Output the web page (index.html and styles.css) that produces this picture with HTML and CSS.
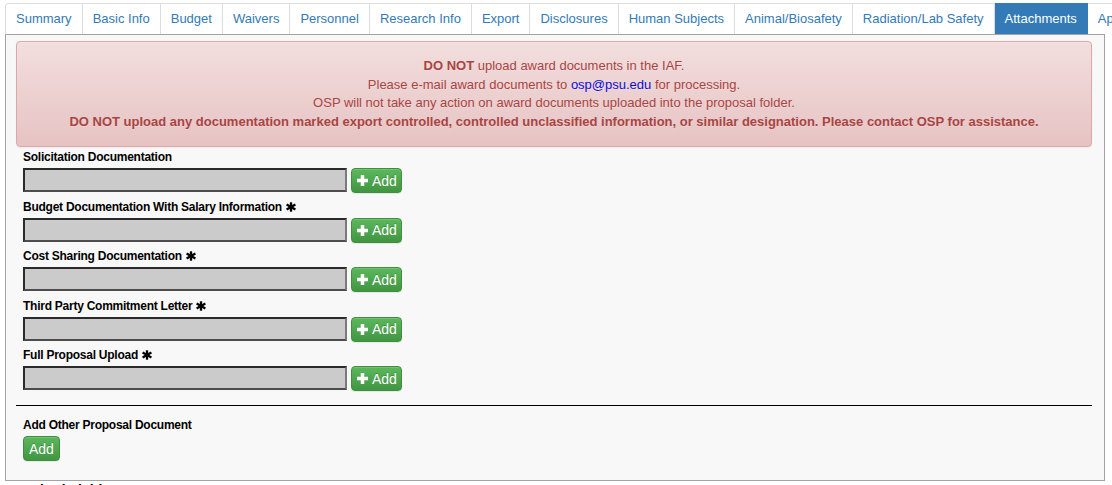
FILE: index.html
```html
<!DOCTYPE html>
<html lang="en">
<head>
<meta charset="utf-8">
<title>Attachments</title>
<link rel="stylesheet" href="styles.css">
</head>
<body>
<div class="page">
  <nav class="tabs">
    <a class="tab first">Summary</a>
    <a class="tab">Basic Info</a>
    <a class="tab">Budget</a>
    <a class="tab">Waivers</a>
    <a class="tab">Personnel</a>
    <a class="tab">Research Info</a>
    <a class="tab">Export</a>
    <a class="tab">Disclosures</a>
    <a class="tab">Human Subjects</a>
    <a class="tab">Animal/Biosafety</a>
    <a class="tab">Radiation/Lab Safety</a>
    <a class="tab active">Attachments</a>
    <a class="tab">Approvals</a>
  </nav>
  <div class="panel">
    <div class="alert">
      <p><strong>DO NOT</strong> upload award documents in the IAF.</p>
      <p>Please e-mail award documents to <a class="mail" href="#">osp@psu.edu</a> for processing.</p>
      <p>OSP will not take any action on award documents uploaded into the proposal folder.</p>
      <p class="strong">DO NOT upload any documentation marked export controlled, controlled unclassified information, or similar designation. Please contact OSP for assistance.</p>
    </div>
    <div class="uploads">
      <div class="field">
        <label class="field-label">Solicitation Documentation</label>
        <div class="field-row">
          <input class="file-box" type="text" readonly>
          <button class="btn" type="button"><svg class="plus" viewBox="0 0 10 10" width="10" height="10"><path d="M3.4 0h3.2v3.4H10v3.2H6.6V10H3.4V6.6H0V3.4h3.4z" fill="#fff"/></svg>Add</button>
        </div>
      </div>
      <div class="field">
        <label class="field-label">Budget Documentation With Salary Information<svg class="req" viewBox="0 0 10 10" width="10" height="10"><g stroke="#000" stroke-width="2.3"><path d="M5 0.3v9.4"/><path d="M0.6 2.5l8.8 5"/><path d="M0.6 7.5l8.8-5"/></g></svg></label>
        <div class="field-row">
          <input class="file-box" type="text" readonly>
          <button class="btn" type="button"><svg class="plus" viewBox="0 0 10 10" width="10" height="10"><path d="M3.4 0h3.2v3.4H10v3.2H6.6V10H3.4V6.6H0V3.4h3.4z" fill="#fff"/></svg>Add</button>
        </div>
      </div>
      <div class="field">
        <label class="field-label">Cost Sharing Documentation<svg class="req" viewBox="0 0 10 10" width="10" height="10"><g stroke="#000" stroke-width="2.3"><path d="M5 0.3v9.4"/><path d="M0.6 2.5l8.8 5"/><path d="M0.6 7.5l8.8-5"/></g></svg></label>
        <div class="field-row">
          <input class="file-box" type="text" readonly>
          <button class="btn" type="button"><svg class="plus" viewBox="0 0 10 10" width="10" height="10"><path d="M3.4 0h3.2v3.4H10v3.2H6.6V10H3.4V6.6H0V3.4h3.4z" fill="#fff"/></svg>Add</button>
        </div>
      </div>
      <div class="field">
        <label class="field-label">Third Party Commitment Letter<svg class="req" viewBox="0 0 10 10" width="10" height="10"><g stroke="#000" stroke-width="2.3"><path d="M5 0.3v9.4"/><path d="M0.6 2.5l8.8 5"/><path d="M0.6 7.5l8.8-5"/></g></svg></label>
        <div class="field-row">
          <input class="file-box" type="text" readonly>
          <button class="btn" type="button"><svg class="plus" viewBox="0 0 10 10" width="10" height="10"><path d="M3.4 0h3.2v3.4H10v3.2H6.6V10H3.4V6.6H0V3.4h3.4z" fill="#fff"/></svg>Add</button>
        </div>
      </div>
      <div class="field">
        <label class="field-label">Full Proposal Upload<svg class="req" viewBox="0 0 10 10" width="10" height="10"><g stroke="#000" stroke-width="2.3"><path d="M5 0.3v9.4"/><path d="M0.6 2.5l8.8 5"/><path d="M0.6 7.5l8.8-5"/></g></svg></label>
        <div class="field-row">
          <input class="file-box" type="text" readonly>
          <button class="btn" type="button"><svg class="plus" viewBox="0 0 10 10" width="10" height="10"><path d="M3.4 0h3.2v3.4H10v3.2H6.6V10H3.4V6.6H0V3.4h3.4z" fill="#fff"/></svg>Add</button>
        </div>
      </div>
    </div>
    <hr class="divider">
    <div class="other">
      <label class="field-label">Add Other Proposal Document</label>
      <button class="btn btn-plain" type="button">Add</button>
    </div>
  </div>
  <div class="required">Required Fields <svg class="req" viewBox="0 0 10 10" width="10" height="10"><g stroke="#000" stroke-width="2.3"><path d="M5 0.3v9.4"/><path d="M0.6 2.5l8.8 5"/><path d="M0.6 7.5l8.8-5"/></g></svg></div>
</div>
</body>
</html>
```

FILE: styles.css
```css
* { box-sizing: border-box; }

html, body {
  margin: 0;
  padding: 0;
  background: #fff;
  overflow: hidden;
}

body {
  font-family: "Liberation Sans", Arial, sans-serif;
  color: #000;
}

.page {
  padding: 3px 0 0 5px;
}

.tabs {
  display: flex;
  flex-wrap: nowrap;
  overflow: hidden;
  white-space: nowrap;
}

.tab {
  flex: none;
  display: block;
  padding: 7px 10px 8px;
  font-size: 13px;
  line-height: 15px;
  color: #337ab7;
  background: #fff;
  border-top: 1px solid #ddd;
  border-right: 1px solid #ddd;
  text-decoration: none;
}

.tab.first {
  border-left: 1px solid #ddd;
  border-top-left-radius: 4px;
}

.tab.active {
  background: #337ab7;
  border-top-color: #337ab7;
  border-right-color: #337ab7;
  color: #fff;
}

.panel {
  width: 1100px;
  border: 1px solid #a3a3a3;
  background: #f8f8f8;
  padding: 6px 12px 19px 10px;
}

.alert {
  margin-bottom: 3px;
  padding: 15px;
  border: 1px solid #dca7a7;
  border-radius: 4px;
  background-image: linear-gradient(to bottom, #f2dede 0, #e7c3c3 100%);
  box-shadow: inset 0 1px 0 rgba(255, 255, 255, .25), 0 1px 2px rgba(0, 0, 0, .05);
  text-shadow: 0 1px 0 rgba(255, 255, 255, .2);
  color: #a94442;
  text-align: center;
  font-size: 13px;
  line-height: 18.57px;
}

.alert p {
  margin: 0;
}

.alert .strong,
.alert strong {
  font-weight: bold;
}

.mail {
  color: #0b0bdc;
  text-decoration: none;
}

.uploads,
.other {
  padding: 0 7px;
}

.field-label {
  display: block;
  font-size: 12px;
  line-height: 14px;
  font-weight: bold;
  letter-spacing: -0.25px;
  margin-bottom: 4px;
  color: #000;
}

.req {
  width: 10px;
  height: 10px;
  margin-left: 4px;
  vertical-align: -1px;
}

.field-row {
  display: flex;
  gap: 4px;
  height: 24px;
  margin-bottom: 7.5px;
}

.file-box {
  width: 324px;
  height: 24px;
  margin: 0;
  padding: 0;
  background: #cbcbcb;
  border: 2px solid;
  border-color: #2a2a2a #7a7a7a #4c4c4c #2a2a2a;
  border-radius: 0;
  outline: none;
}

.btn {
  display: inline-flex;
  align-items: center;
  gap: 4px;
  height: 25px;
  margin: 0;
  padding: 0 4px 0 5px;
  font-family: "Liberation Sans", Arial, sans-serif;
  font-size: 14px;
  line-height: 20px;
  color: #fff;
  border: 1px solid #3e8f3e;
  border-radius: 4px;
  background-image: linear-gradient(to bottom, #5cb85c 0, #419641 100%);
  box-shadow: inset 0 1px 0 rgba(255, 255, 255, .15), 0 1px 1px rgba(0, 0, 0, .075);
  text-shadow: 0 -1px 0 rgba(0, 0, 0, .2);
  cursor: pointer;
}

.btn-plain {
  padding: 0 5px;
}

.plus {
  width: 11px;
  height: 11px;
  flex: none;
}

.divider {
  height: 0;
  margin: 15px 0 12px;
  border: 0;
  border-top: 1px solid #000;
}

.required {
  margin-top: 1px;
  font-size: 14px;
  line-height: 16px;
  font-weight: bold;
}
```
